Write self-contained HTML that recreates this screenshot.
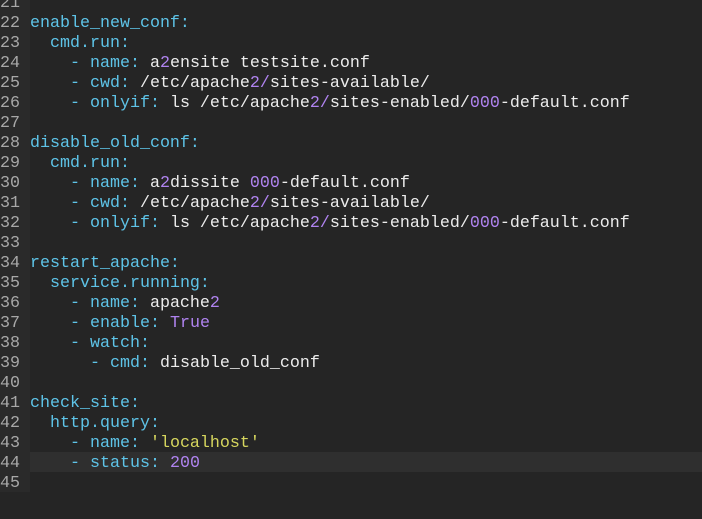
<!DOCTYPE html>
<html><head><meta charset="utf-8"><style>
html,body{margin:0;padding:0;width:702px;height:519px;overflow:hidden;background:#252525;}
.g{position:absolute;left:0;top:0;width:30px;height:492px;background:#2a2a2a;}
.hl{position:absolute;left:30px;top:452px;width:672px;height:20px;background:#2f2f2f;}
.code{position:absolute;left:0;top:-6px;font-family:"Liberation Mono",monospace;font-size:16.67px;line-height:20px;white-space:pre;color:#ececec;}
.n{display:inline-block;width:30px;color:#a8a8a8;}
.k{color:#5ec4e8}.p{color:#b083f0}.y{color:#d6d65e}
</style></head><body>
<div class="g"></div><div class="hl"></div>
<div class="code"><span class="n">21</span>
<span class="n">22</span><span class="k">enable_new_conf:</span>
<span class="n">23</span>  <span class="k">cmd.run:</span>
<span class="n">24</span>    <span class="k">- name:</span> a<span class="p">2</span>ensite testsite.conf
<span class="n">25</span>    <span class="k">- cwd:</span> /etc/apache<span class="p">2/</span>sites-available/
<span class="n">26</span>    <span class="k">- onlyif:</span> ls /etc/apache<span class="p">2/</span>sites-enabled/<span class="p">000</span>-default.conf
<span class="n">27</span>
<span class="n">28</span><span class="k">disable_old_conf:</span>
<span class="n">29</span>  <span class="k">cmd.run:</span>
<span class="n">30</span>    <span class="k">- name:</span> a<span class="p">2</span>dissite <span class="p">000</span>-default.conf
<span class="n">31</span>    <span class="k">- cwd:</span> /etc/apache<span class="p">2/</span>sites-available/
<span class="n">32</span>    <span class="k">- onlyif:</span> ls /etc/apache<span class="p">2/</span>sites-enabled/<span class="p">000</span>-default.conf
<span class="n">33</span>
<span class="n">34</span><span class="k">restart_apache:</span>
<span class="n">35</span>  <span class="k">service.running:</span>
<span class="n">36</span>    <span class="k">- name:</span> apache<span class="p">2</span>
<span class="n">37</span>    <span class="k">- enable:</span> <span class="p">True</span>
<span class="n">38</span>    <span class="k">- watch:</span>
<span class="n">39</span>      <span class="k">- cmd:</span> disable_old_conf
<span class="n">40</span>
<span class="n">41</span><span class="k">check_site:</span>
<span class="n">42</span>  <span class="k">http.query:</span>
<span class="n">43</span>    <span class="k">- name:</span> <span class="y">'localhost'</span>
<span class="n">44</span>    <span class="k">- status:</span> <span class="p">200</span>
<span class="n">45</span></div>
</body></html>
